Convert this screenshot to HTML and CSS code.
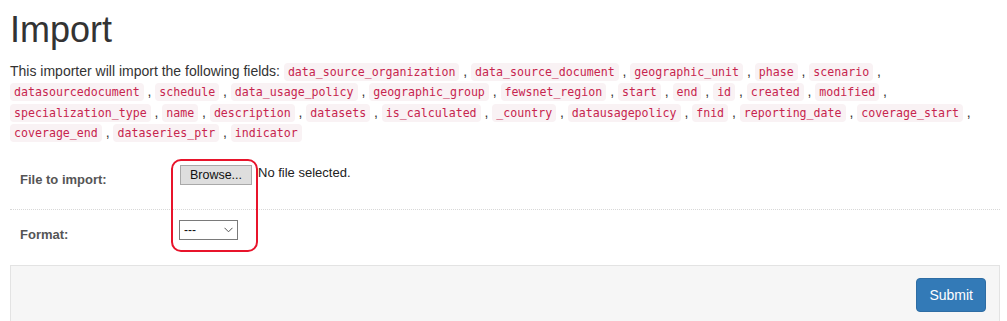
FILE: index.html
```html
<html>
    <head>
        <meta charset="utf-8" />
        <title>Import</title>
        <link rel="stylesheet" href="styles.css">
    </head>
    <body>
        <div class="page">
            <h1>Import</h1>
            <p class="fields">This importer will import the following fields:
                <code>data_source_organization</code> , <code>data_source_document</code> , <code>geographic_unit</code> , <code>phase</code> , <code>scenario</code> ,
                <code>datasourcedocument</code> , <code>schedule</code> , <code>data_usage_policy</code> , <code>geographic_group</code> , <code>fewsnet_region</code> , <code>start</code> , <code>end</code> , <code>id</code> , <code>created</code> , <code>modified</code> ,
                <code>specialization_type</code> , <code>name</code> , <code>description</code> , <code>datasets</code> , <code>is_calculated</code> , <code>_country</code> , <code>datausagepolicy</code> , <code>fnid</code> , <code>reporting_date</code> , <code>coverage_start</code> ,
                <code>coverage_end</code> , <code>dataseries_ptr</code> , <code>indicator</code>
            </p>

            <form class="import-form">
                <div class="form-row first">
                    <label class="form-label">File to import:</label>
                    <div class="file-input">
                        <span class="browse">Browse...</span>
                        <span class="file-name">No file selected.</span>
                    </div>
                </div>
                <div class="form-row second">
                    <label class="form-label">Format:</label>
                    <div class="select">
                        <span>---</span>
                        <svg width="9" height="6" viewBox="0 0 9 6"><path d="M0.5 0.8 L4.5 4.8 L8.5 0.8" fill="none" stroke="#555" stroke-width="1"/></svg>
                    </div>
                </div>
                <div class="submit-row">
                    <button type="button" class="btn-primary">Submit</button>
                </div>
            </form>
        </div>

        <!-- red marker drawn over the inputs -->
        <div class="highlight"></div>
    </body>
</html>
```

FILE: styles.css
```css
body {
    margin: 0;
    background: #fff;
    color: #333;
    font-family: "Liberation Sans", Arial, sans-serif;
    font-size: 14px;
    line-height: 20px;
}

.page {
    padding: 0 7px 0 10px;
}

h1 {
    margin: 10px 0 12px;
    font-size: 36px;
    font-weight: normal;
    line-height: 39px;
    color: #333;
}

.fields {
    margin: 0 0 10px;
    line-height: 20.4px;
}

code {
    font-family: "DejaVu Sans Mono", "Liberation Mono", monospace;
    font-size: 11.6px;
    line-height: 12px;
    padding: 2px 4px;
    color: #c7254e;
    background: #f9f2f4;
    border-radius: 4px;
}

.form-row {
    display: flex;
    align-items: flex-start;
    padding: 0 10px;
}

.form-row.first {
    padding-top: 12px;
    padding-bottom: 19px;
    border-bottom: 1px dotted #d8d8d8;
}

.form-row.second {
    padding-top: 10px;
    padding-bottom: 20px;
}

.form-label {
    width: 160px;
    padding-top: 5px;
    font-size: 13px;
    font-weight: bold;
    color: #555;
}

.file-input {
    display: flex;
    align-items: center;
}

.browse {
    box-sizing: border-box;
    width: 72px;
    height: 20px;
    border: 1px solid #a9a9a9;
    background: #dedede;
    color: #111;
    font-size: 12.5px;
    line-height: 18px;
    text-align: center;
}

.file-name {
    margin-left: 6px;
    font-size: 13px;
    color: #222;
    line-height: 18px;
    margin-top: -4px;
}

.select {
    box-sizing: border-box;
    display: flex;
    align-items: center;
    justify-content: space-between;
    width: 59px;
    height: 20px;
    margin-left: -1px;
    padding: 0 4px 0 4px;
    border: 1px solid #7a7a7a;
    background: #fff;
    font-size: 12px;
    color: #111;
}

.submit-row {
    padding: 12px 13px;
    border: 1px solid #e3e3e3;
    background: #f6f6f6;
    text-align: right;
}

.btn-primary {
    padding: 6px 12px;
    font-family: "Liberation Sans", Arial, sans-serif;
    font-size: 14px;
    line-height: 20px;
    color: #fff;
    background: #337ab7;
    border: 1px solid #2e6da4;
    border-radius: 4px;
}

.highlight {
    position: absolute;
    left: 171px;
    top: 159px;
    width: 87px;
    height: 93px;
    box-sizing: border-box;
    border: 2px solid #e8142b;
    border-radius: 10px;
}
```
